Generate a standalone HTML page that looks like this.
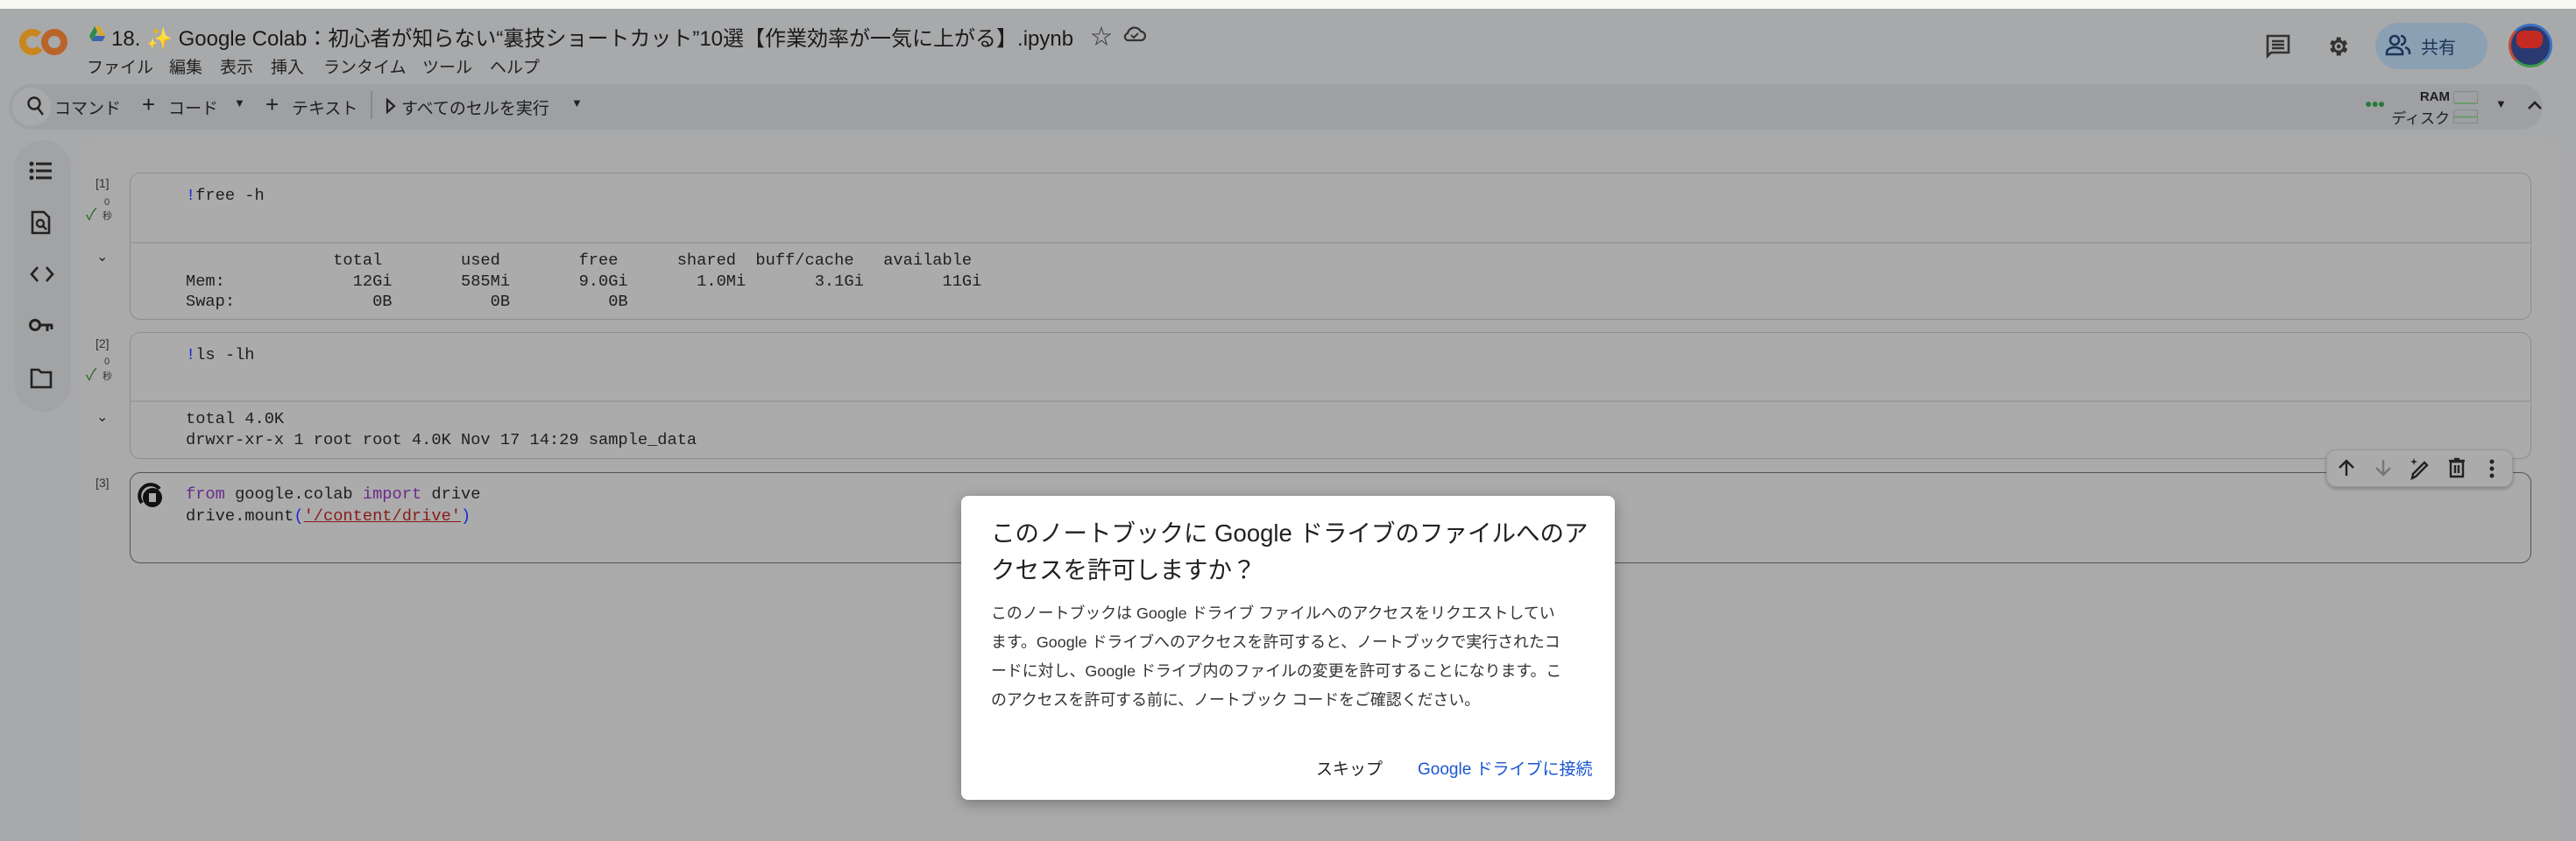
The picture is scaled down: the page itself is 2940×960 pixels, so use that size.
<!DOCTYPE html>
<html><head><meta charset="utf-8"><style>
*{margin:0;padding:0;box-sizing:border-box}
body{width:2940px;height:946px;overflow:hidden;background:#a8a9ab;font-family:"Liberation Sans","Noto Sans CJK JP",sans-serif;color:#1f1f1f;position:relative}
.a{position:absolute;white-space:pre}
.mono{font-family:"Liberation Mono","Noto Sans CJK JP",monospace;font-size:18.7px;color:#1e1e1e}
.cell{position:absolute;left:148px;width:2741px;background:#ababab;border:1.5px solid #8e8e8e;border-radius:12px}
.div{position:absolute;left:0;right:0;height:1.5px;background:#9c9c9c}
.lbl{font-size:14px;color:#333}
</style></head><body>
<div class="a" style="left:0;top:0;width:2940px;height:10px;background:#f7f8ef"></div>
<svg class="a" style="left:22px;top:28px" width="58" height="40" viewBox="0 0 58 40"><circle cx="15" cy="20" r="11" fill="none" stroke="#c9861f" stroke-width="8" stroke-dasharray="52 20" transform="rotate(40 15 20)"/><circle cx="40" cy="20" r="11" fill="none" stroke="#b9652a" stroke-width="8"/></svg>
<svg class="a" style="left:101px;top:29px" width="20" height="20" viewBox="0 0 20 20"><path d="M7 1h6l6 11h-6z" fill="#d8a82a"/><path d="M7 1l-6 11 3 6 6-11z" fill="#2f8a4a"/><path d="M4 18h12l3-6H7z" fill="#3c64b0"/></svg>
<div class="a" style="left:127px;top:24px;font-size:24px;color:#1a1a1a">18. <span style="color:#d9b63a">✨</span> Google Colab：初心者が知らない“裏技ショートカット”10選【作業効率が一気に上がる】.ipynb</div>
<div class="a" style="left:1245px;top:22px;font-size:24px;color:#333">☆</div>
<svg class="a" style="left:1282px;top:27px" width="26" height="22" viewBox="0 0 26 22"><path d="M7 19h13a5 5 0 0 0 0-10 8 8 0 0 0-15 2 4 4 0 0 0 2 8z" fill="none" stroke="#333" stroke-width="2.2"/><path d="M9 13l3 3 5-5" fill="none" stroke="#333" stroke-width="2"/></svg>
<div class="a" style="left:99px;top:62px;font-size:19px;color:#222">ファイル</div>
<div class="a" style="left:193px;top:62px;font-size:19px;color:#222">編集</div>
<div class="a" style="left:251px;top:62px;font-size:19px;color:#222">表示</div>
<div class="a" style="left:309px;top:62px;font-size:19px;color:#222">挿入</div>
<div class="a" style="left:369px;top:62px;font-size:19px;color:#222">ランタイム</div>
<div class="a" style="left:482px;top:62px;font-size:19px;color:#222">ツール</div>
<div class="a" style="left:559px;top:62px;font-size:19px;color:#222">ヘルプ</div>
<svg class="a" style="left:2586px;top:39px" width="28" height="28" viewBox="0 0 28 28"><path d="M2 2h24v19H6l-4 4z" fill="none" stroke="#333" stroke-width="2.6"/><path d="M7 8h14M7 12h14M7 16h14" stroke="#333" stroke-width="2.4"/></svg>
<svg class="a" style="left:2654px;top:39px" width="28" height="28" viewBox="0 0 24 24"><path fill="#333" d="M19.4 13a7.5 7.5 0 0 0 0-2l2.1-1.6-2-3.5-2.5 1a7 7 0 0 0-1.7-1L15 3h-4l-.4 2.9a7 7 0 0 0-1.7 1l-2.5-1-2 3.5L6.6 11a7.5 7.5 0 0 0 0 2l-2.1 1.6 2 3.5 2.5-1a7 7 0 0 0 1.7 1L11 21h4l.4-2.9a7 7 0 0 0 1.7-1l2.5 1 2-3.5zM13 16a4 4 0 1 1 0-8 4 4 0 0 1 0 8z"/><circle cx="13" cy="12" r="2" fill="#333"/></svg>
<div class="a" style="left:2711px;top:26px;width:128px;height:53px;border-radius:27px;background:#8ba0b3"></div>
<svg class="a" style="left:2722px;top:38px" width="30" height="28" viewBox="0 0 30 28"><circle cx="11" cy="8" r="5" fill="none" stroke="#1c3558" stroke-width="2.6"/><path d="M2 24v-2c0-4 5-6 9-6s9 2 9 6v2z" fill="none" stroke="#1c3558" stroke-width="2.6"/><path d="M18 3a5 5 0 0 1 0 10M23 16c3 1 5 3 5 6v2" fill="none" stroke="#1c3558" stroke-width="2.6"/></svg>
<div class="a" style="left:2763px;top:38px;font-size:20px;color:#1c3558">共有</div>
<div class="a" style="left:2863px;top:27px;width:50px;height:50px;border-radius:50%;border:3px solid #3a6fc0;border-left-color:#c44a3a;border-bottom-color:#3a9a4a;background:#2a3a70"></div>
<div class="a" style="left:2872px;top:35px;width:30px;height:20px;border-radius:8px;background:#c42a22"></div>
<div class="a" style="left:10px;top:96px;width:2892px;height:52px;border-radius:26px;background:#9ea0a3"></div>
<div class="a" style="left:14px;top:100px;width:44px;height:44px;border-radius:22px;background:#a8a9ab"></div>
<svg class="a" style="left:30px;top:109px" width="22" height="24" viewBox="0 0 22 24"><circle cx="9" cy="9" r="6.5" fill="none" stroke="#222" stroke-width="2.4"/><path d="M13 14l6 8" stroke="#222" stroke-width="2.4"/></svg>
<div class="a" style="left:62px;top:109px;font-size:19px">コマンド</div>
<div class="a" style="left:162px;top:104px;font-size:26px">+</div>
<div class="a" style="left:192px;top:109px;font-size:19px">コード</div>
<div class="a" style="left:267px;top:110px;font-size:13px">▼</div>
<div class="a" style="left:303px;top:104px;font-size:26px">+</div>
<div class="a" style="left:333px;top:109px;font-size:19px">テキスト</div>
<div class="a" style="left:423px;top:104px;width:1.5px;height:32px;background:#888"></div>
<svg class="a" style="left:440px;top:112px" width="12" height="18" viewBox="0 0 12 18"><path d="M2 2l8 7-8 7z" fill="none" stroke="#222" stroke-width="2.2"/></svg>
<div class="a" style="left:458px;top:109px;font-size:19px">すべてのセルを実行</div>
<div class="a" style="left:652px;top:110px;font-size:13px">▼</div>
<div class="a" style="left:2699px;top:110px;font-size:14px;color:#2a7a3a;letter-spacing:-1px">●●●</div>
<div class="a" style="left:2700px;top:102px;width:96px;text-align:right;font-size:15px;font-weight:bold">RAM</div>
<div class="a" style="left:2700px;top:121px;width:96px;text-align:right;font-size:17px">ディスク</div>
<div class="a" style="left:2800px;top:104px;width:28px;height:15px;border:1px solid #888;border-radius:2px;border-bottom:2px solid #6a9a6a"></div>
<div class="a" style="left:2800px;top:125px;width:28px;height:16px;border:1px solid #888;border-radius:2px;background:linear-gradient(#0000 45%,#6a9a6a 45%,#6a9a6a 60%,#0000 60%)"></div>
<div class="a" style="left:2848px;top:111px;font-size:13px">▼</div>
<svg class="a" style="left:2883px;top:113px" width="20" height="14" viewBox="0 0 20 14"><path d="M3 11l7-7 7 7" fill="none" stroke="#222" stroke-width="2.6"/></svg>
<div class="a" style="left:8px;top:160px;width:28px;height:786px;background:#a7a8aa"></div>
<div class="a" style="left:17px;top:160px;width:64px;height:310px;border-radius:32px;background:#a2a3a5"></div>
<div class="a" style="left:90px;top:160px;width:2835px;height:800px;border-radius:22px 22px 0 0;background:#aaaaaa"></div>
<svg class="a" style="left:33px;top:184px" width="28" height="22" viewBox="0 0 28 22"><g fill="#222"><circle cx="3" cy="3" r="2.5"/><circle cx="3" cy="11" r="2.5"/><circle cx="3" cy="19" r="2.5"/><rect x="8" y="1.5" width="18" height="3"/><rect x="8" y="9.5" width="18" height="3"/><rect x="8" y="17.5" width="18" height="3"/></g></svg>
<svg class="a" style="left:35px;top:240px" width="24" height="28" viewBox="0 0 24 28"><path d="M2 2h13l6 6v18H2z" fill="none" stroke="#222" stroke-width="2.6"/><circle cx="11" cy="15" r="4" fill="none" stroke="#222" stroke-width="2.4"/><path d="M14 18l4 4" stroke="#222" stroke-width="2.4"/></svg>
<svg class="a" style="left:34px;top:303px" width="28" height="20" viewBox="0 0 28 20"><path d="M9 2L2 10l7 8M19 2l7 8-7 8" fill="none" stroke="#222" stroke-width="2.6"/></svg>
<svg class="a" style="left:32px;top:362px" width="30" height="20" viewBox="0 0 30 20"><circle cx="8" cy="9" r="5.5" fill="none" stroke="#222" stroke-width="3"/><path d="M13 9h15M22 9v7M27 9v5" stroke="#222" stroke-width="3"/></svg>
<svg class="a" style="left:34px;top:420px" width="26" height="24" viewBox="0 0 26 24"><path d="M2 2h8l3 3h11v17H2z" fill="none" stroke="#222" stroke-width="2.6"/></svg>
<div class="a lbl" style="left:109px;top:201px">[1]</div>
<div class="a" style="left:98px;top:231px;font-size:18px;color:#2a6a2a">✓</div>
<div class="a" style="left:119px;top:225px;font-size:11px;color:#333">0</div>
<div class="a" style="left:117px;top:238px;font-size:11px;color:#333">秒</div>
<div class="a" style="left:110px;top:283px;font-size:16px;color:#222">⌄</div>
<div class="cell" style="top:197px;height:168px"><div class="div" style="top:78px"></div></div>
<div class="a mono" style="left:212px;top:212px"><span style="color:#1a2ad0">!</span>free -h</div>
<div class="a mono" style="left:212px;top:286px;line-height:23.5px">               total        used        free      shared  buff/cache   available
Mem:             12Gi       585Mi       9.0Gi       1.0Mi       3.1Gi        11Gi
Swap:              0B          0B          0B</div>
<div class="a lbl" style="left:109px;top:384px">[2]</div>
<div class="a" style="left:98px;top:414px;font-size:18px;color:#2a6a2a">✓</div>
<div class="a" style="left:119px;top:407px;font-size:11px;color:#333">0</div>
<div class="a" style="left:117px;top:421px;font-size:11px;color:#333">秒</div>
<div class="a" style="left:110px;top:466px;font-size:16px;color:#222">⌄</div>
<div class="cell" style="top:379px;height:145px"><div class="div" style="top:77px"></div></div>
<div class="a mono" style="left:212px;top:394px"><span style="color:#1a2ad0">!</span>ls -lh</div>
<div class="a mono" style="left:212px;top:467px;line-height:23.5px">total 4.0K
drwxr-xr-x 1 root root 4.0K Nov 17 14:29 sample_data</div>
<div class="a lbl" style="left:109px;top:543px">[3]</div>
<div class="cell" style="top:539px;height:104px;border-color:#555"></div>
<svg class="a" style="left:156px;top:548px" width="32" height="34" viewBox="0 0 32 34"><path d="M6 26A12 12 0 1 1 26 10" fill="none" stroke="#111" stroke-width="4"/><circle cx="18" cy="20" r="11" fill="#111"/><rect x="14" y="15" width="8" height="10" fill="#aaa"/></svg>
<div class="a mono" style="left:212px;top:552px;line-height:25px"><span style="color:#6a2a8a">from</span> google.colab <span style="color:#6a2a8a">import</span> drive
drive.mount<span style="color:#1a2ad0">(</span><span style="color:#8a1a1a;text-decoration:underline">'/content/drive'</span><span style="color:#1a2ad0">)</span></div>
<div class="a" style="left:2655px;top:513px;width:213px;height:43px;border-radius:11px;background:#ababab;border:1px solid #999;box-shadow:0 2px 4px rgba(0,0,0,.25)"></div>
<svg class="a" style="left:2666px;top:522px" width="24" height="24" viewBox="0 0 24 24"><path d="M12 21V4M4 12l8-8 8 8" fill="none" stroke="#222" stroke-width="2.4"/></svg>
<svg class="a" style="left:2708px;top:522px" width="24" height="24" viewBox="0 0 24 24"><path d="M12 3v17M4 12l8 8 8-8" fill="none" stroke="#777" stroke-width="2.4"/></svg>
<svg class="a" style="left:2749px;top:522px" width="26" height="26" viewBox="0 0 26 26"><path d="M4 24l1-5L18 6l3 3L8 22z" fill="none" stroke="#222" stroke-width="2.4"/><path d="M6 1l1 3 3 1-3 1-1 3-1-3-3-1 3-1z" fill="#222"/></svg>
<svg class="a" style="left:2794px;top:522px" width="20" height="24" viewBox="0 0 20 24"><path d="M1 4h18M7 2h6M3 5h14v17H3zM8 9v9M12 9v9" fill="none" stroke="#222" stroke-width="2.4"/></svg>
<svg class="a" style="left:2840px;top:524px" width="8" height="22" viewBox="0 0 8 22"><circle cx="4" cy="3" r="2.5" fill="#222"/><circle cx="4" cy="11" r="2.5" fill="#222"/><circle cx="4" cy="19" r="2.5" fill="#222"/></svg>
<div class="a" style="left:1097px;top:566px;width:746px;height:347px;background:#fff;border-radius:8px;box-shadow:0 4px 16px rgba(0,0,0,.3)"></div>
<div class="a" style="left:1131px;top:588px;font-size:27.5px;line-height:42px;color:#202124">このノートブックに Google ドライブのファイルへのア
クセスを許可しますか？</div>
<div class="a" style="left:1131px;top:684px;font-size:17.9px;line-height:33px;color:#333">このノートブックは Google ドライブ ファイルへのアクセスをリクエストしてい
ます。Google ドライブへのアクセスを許可すると、ノートブックで実行されたコ
ードに対し、Google ドライブ内のファイルの変更を許可することになります。こ
のアクセスを許可する前に、ノートブック コードをご確認ください。</div>
<div class="a" style="left:1502px;top:863px;font-size:19px;color:#222">スキップ</div>
<div class="a" style="left:1618px;top:863px;font-size:19px;color:#1a56d0">Google ドライブに接続</div>
</body></html>
